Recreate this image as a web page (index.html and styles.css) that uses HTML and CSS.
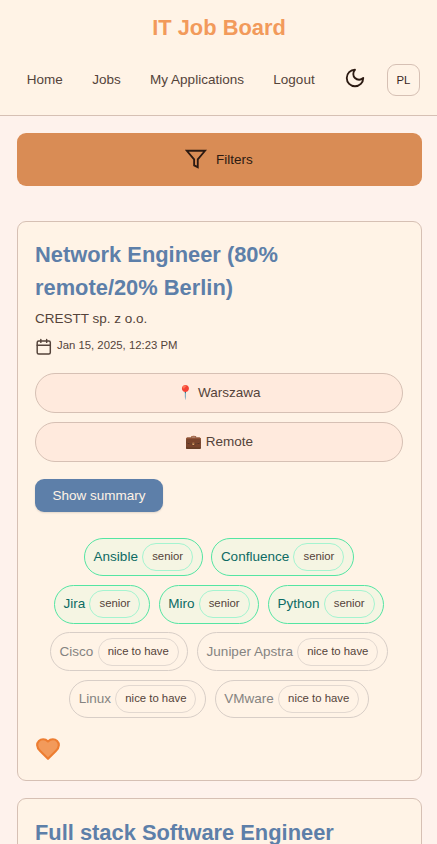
FILE: index.html
```html
<!DOCTYPE html>
<html lang="en">
<head>
<meta charset="utf-8">
<title>IT Job Board</title>
<link rel="stylesheet" href="styles.css">
</head>
<body>
<header class="header">
  <h1 class="brand">IT Job Board</h1>
  <nav class="nav">
    <a>Home</a><a>Jobs</a><a>My Applications</a><a>Logout</a>
    <svg class="moon" viewBox="0 0 24 24" aria-hidden="true"><path d="M12 3a6 6 0 0 0 9 9 9 9 0 1 1-9-9Z"/></svg>
    <button class="lang">PL</button>
  </nav>
</header>
<main class="main">
  <button class="filters">
    <svg viewBox="0 0 24 24" aria-hidden="true"><path d="M22 3H2l8 9.46V19l4 2v-8.54L22 3z"/></svg>
    Filters
  </button>
  <article class="card">
    <h2 class="title">Network Engineer (80% remote/20% Berlin)</h2>
    <p class="company">CRESTT sp. z o.o.</p>
    <div class="date">
      <svg viewBox="0 0 24 24" aria-hidden="true"><rect x="3" y="4" width="18" height="18" rx="2"/><path d="M16 2v4M8 2v4M3 10h18"/></svg>
      <span>Jan 15, 2025, 12:23 PM</span>
    </div>
    <div class="places">
      <div class="place">📍 Warszawa</div>
      <div class="place">💼 Remote</div>
    </div>
    <button class="summary">Show summary</button>
    <div class="skills">
      <div class="skill">Ansible<span class="level">senior</span></div>
      <div class="skill">Confluence<span class="level">senior</span></div>
      <div class="skill">Jira<span class="level">senior</span></div>
      <div class="skill">Miro<span class="level">senior</span></div>
      <div class="skill">Python<span class="level">senior</span></div>
      <div class="skill optional">Cisco<span class="level">nice to have</span></div>
      <div class="skill optional">Juniper Apstra<span class="level">nice to have</span></div>
      <div class="skill optional">Linux<span class="level">nice to have</span></div>
      <div class="skill optional">VMware<span class="level">nice to have</span></div>
    </div>
    <svg class="heart" viewBox="0 0 24 24" aria-hidden="true"><path d="M19 14c1.49-1.46 3-3.21 3-5.5A5.5 5.5 0 0 0 16.5 3c-1.76 0-3 .5-4.5 2-1.5-1.5-2.74-2-4.5-2A5.5 5.5 0 0 0 2 8.5c0 2.3 1.5 4.05 3 5.5l7 7Z"/></svg>
  </article>
  <article class="card">
    <h2 class="title">Full stack Software Engineer</h2>
  </article>
</main>
</body>
</html>
```
FILE: styles.css
```css
* { box-sizing: border-box; }
html { overflow: hidden; }
body {
  margin: 0;
  height: 844px;
  overflow: hidden;
  background: #fef2ec;
  color: #54433a;
  font: 13.5px/20px "Liberation Sans", Arial, sans-serif;
}
h1, h2, p { margin: 0; }
button { font: inherit; color: inherit; border: 0; padding: 0; }
svg { fill: none; stroke: currentColor; stroke-linecap: round; stroke-linejoin: round; flex: none; }

.header {
  height: 116px;
  padding-top: 11px;
  background: #fff3e6;
  border-bottom: 1px solid #d6c0b4;
}
.brand { padding-left: 1px; font-size: 21.87px; line-height: 33px; text-align: center; color: #f29a5b; }
.nav { display: flex; align-items: center; height: 32px; margin: 20px 17px 0 26.7px; }
.nav a { margin-right: 29.45px; white-space: nowrap; }
.moon { width: 22px; height: 22px; margin: -5px 0 0; stroke: #2c1a12; stroke-width: 2; }
.lang {
  flex: none;
  width: 33px;
  height: 32px;
  margin-left: auto;
  border: 1px solid #d6c0b4;
  border-radius: 9px;
  background: none;
  color: #3a271e;
  font-size: 11.35px;
  line-height: 28px;
}

.main { height: 728px; overflow: hidden; padding: 17px 15px 0 17px; }
.filters {
  display: flex;
  align-items: center;
  justify-content: center;
  gap: 9px;
  width: 100%;
  height: 53px;
  margin-bottom: 35px;
  padding-right: 1px;
  border-radius: 9px;
  background: #d98c55;
  color: #2c1a12;
}
.filters svg { width: 21.9px; height: 21.9px; margin-top: -1px; stroke-width: 2; stroke-linecap: butt; stroke-linejoin: miter; }

.card {
  height: 560px;
  margin-bottom: 17px;
  padding: 16.4px 18px 0 17px;
  background: #fff3e6;
  border: 1px solid #d6c0b4;
  border-radius: 9px;
}
.card + .card { padding-top: 17px; }
.title { font-size: 21.87px; line-height: 33px; color: #5d7fa9; }
.company { margin-top: 4.6px; }
.date { display: flex; align-items: center; gap: 4.5px; margin-top: 6px; height: 20px; font-size: 11.35px; }
.date svg { width: 17.5px; height: 17.5px; margin-top: 3px; stroke-width: 2; }
.date span { margin-top: 0; }
.places { display: grid; gap: 9px; margin-top: 18px; }
.place {
  height: 40px;
  line-height: 38px;
  text-align: center;
  background: #ffeadd;
  border: 1px solid #d6c0b4;
  border-radius: 20px;
}
.summary {
  display: block;
  width: 128px;
  height: 33px;
  margin-top: 17px;
  padding-top: 1px;
  border-radius: 9px;
  background: #5d7fa9;
  color: #fff3e6;
  box-shadow: 0 1px 2px rgba(0, 0, 0, .12);
}
.skills {
  display: flex;
  flex-wrap: wrap;
  justify-content: center;
  gap: 8.8px 8.6px;
  margin: 26px 0 0;
}
.skill {
  display: flex;
  align-items: center;
  gap: 4.3px;
  height: 38.4px;
  padding: 0 8.6px;
  border: 1px solid #54e5a3;
  border-radius: 20px;
  background: #f5f5e3;
  color: #0c6b63;
  line-height: 36px;
}
.level {
  height: 28px;
  padding: 0 9px;
  border: 1px solid #a4f4d0;
  border-radius: 14px;
  color: #54433a;
  font-size: 11.35px;
  line-height: 25px;
}
.optional { background: none; border-color: #d8cec7; color: #858381; }
.optional .level { border-color: #e2d8d0; }
.heart { display: block; width: 26px; height: 26px; margin-top: 18.3px; fill: #f29a5b; stroke: #ed7d31; stroke-width: 2; }
```
